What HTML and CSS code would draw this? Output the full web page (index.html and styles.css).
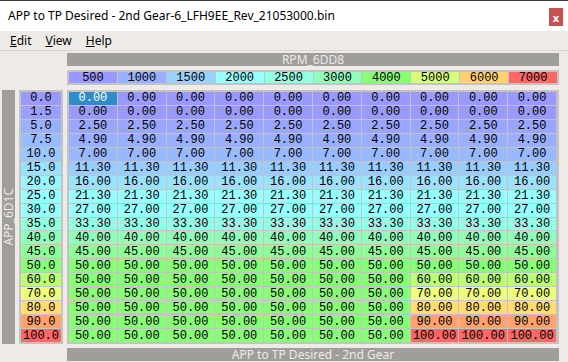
FILE: index.html
```html
<!DOCTYPE html>
<html>
<head>
    <title>APP to TP Desired - 2nd Gear</title>
    <link rel="stylesheet" href="styles.css">
</head>
<body>

<div class="titlebar">
    <span class="title">APP to TP Desired - 2nd Gear-6_LFH9EE_Rev_21053000.bin</span>
    <span class="close">x</span>
</div>

<div class="menubar">
    <span><u>E</u>dit</span>
    <span><u>V</u>iew</span>
    <span><u>H</u>elp</span>
</div>

<div class="sheet">
    <div class="axis-x">RPM_6DD8</div>
    <div class="col-head" id="colHead"></div>
    <div class="axis-y"><span>APP_6D1C</span></div>
    <div class="row-head" id="rowHead"></div>
    <div class="cells" id="cells"></div>
    <div class="table-name">APP to TP Desired - 2nd Gear</div>
</div>

<script>
    const rpm = [500, 1000, 1500, 2000, 2500, 3000, 4000, 5000, 6000, 7000];
    const rpmShade = [0, 5, 12, 25, 34, 40, 50, 65, 82, 100];
    const app = [0, 1.5, 5, 7.5, 10, 15, 20, 25, 30, 35, 40, 45, 50, 60, 70, 80, 90, 100];
    const base = [0, 0, 2.5, 4.9, 7, 11.3, 16, 21.3, 27, 33.3, 40, 45, 50, 50, 50, 50, 50, 50];

    // colour scale used by the editor, 0..100
    const stops = [
        [0, 153, 153, 255],
        [22, 153, 255, 255],
        [30, 150, 255, 255],
        [50, 136, 255, 119],
        [70, 238, 255, 119],
        [80, 255, 221, 112],
        [100, 255, 102, 102]
    ];

    function shade(v) {
        for (let i = 1; i < stops.length; i++) {
            const a = stops[i - 1];
            const b = stops[i];
            if (v <= b[0]) {
                const t = (v - a[0]) / (b[0] - a[0]);
                const c = [1, 2, 3].map(k => Math.round(a[k] + (b[k] - a[k]) * t));
                return 'rgb(' + c.join(',') + ')';
            }
        }
        return 'rgb(255,102,102)';
    }

    function cell(text, v) {
        const el = document.createElement('div');
        el.className = 'cell';
        el.textContent = text;
        el.style.background = shade(v);
        return el;
    }

    const colHead = document.getElementById('colHead');
    rpm.forEach((r, i) => colHead.appendChild(cell(r, rpmShade[i])));

    const rowHead = document.getElementById('rowHead');
    app.forEach(a => rowHead.appendChild(cell(a.toFixed(1), a)));

    const cells = document.getElementById('cells');
    app.forEach((a, r) => {
        for (let c = 0; c < rpm.length; c++) {
            let v = base[r];
            if (c >= 7 && a >= 50) {
                v = a;
            }
            const el = cell(v.toFixed(2), v);
            if (r === 0 && c === 0) {
                el.classList.add('selected');
            }
            cells.appendChild(el);
        }
    });
</script>

</body>
</html>
```

FILE: styles.css
```css
body {
    font-family: "Noto Sans", sans-serif;
    font-size: 12px;
    margin: 0;
    padding: 0;
    width: 568px;
    height: 362px;
    overflow: hidden;
    background-color: #eeebe6;
    color: #000;
}

.titlebar {
    height: 30px;
    border-top: 1px solid #3c3c3c;
    background-color: #fff;
    display: flex;
    align-items: center;
    padding-left: 8px;
}

.title {
    font-size: 12px;
    padding-bottom: 1px;
}

.close {
    margin-left: auto;
    margin-right: 5px;
    margin-top: 2px;
    width: 14px;
    height: 18px;
    background-color: #c75050;
    color: #fff;
    font-weight: bold;
    font-size: 11px;
    display: flex;
    align-items: center;
    justify-content: center;
    line-height: 1;
}

.menubar {
    height: 19px;
    border-bottom: 1px solid #d9d6d1;
    display: flex;
    align-items: center;
    gap: 14px;
    padding-left: 10px;
}

.sheet {
    display: grid;
    grid-template-columns: 13px 44px 492px;
    grid-template-rows: 13px 16px 254px 13px;
    column-gap: 4px;
    row-gap: 4px;
    padding: 2px 0 0 2px;
}

.axis-x,
.table-name {
    grid-column: 3;
    background-color: #a09e9a;
    color: #ecebe9;
    display: flex;
    align-items: center;
    justify-content: center;
    line-height: 1;
}

.axis-x {
    grid-row: 1;
}

.table-name {
    grid-row: 4;
}

.axis-y {
    grid-column: 1;
    grid-row: 3;
    background-color: #a09e9a;
    color: #ecebe9;
    display: flex;
    align-items: center;
    justify-content: center;
}

.axis-y span {
    writing-mode: vertical-rl;
    transform: rotate(180deg);
    line-height: 1;
}

.col-head {
    grid-column: 3;
    grid-row: 2;
    height: 15px;
    box-sizing: border-box;
    padding: 2px 2px 2px 2px;
    background-color: #c3c3c3;
    display: grid;
    grid-template-columns: repeat(10, 1fr);
    column-gap: 1px;
}

.row-head {
    grid-column: 2;
    grid-row: 3;
    padding: 2px;
    background-color: #c3c3c3;
    display: grid;
    grid-template-rows: repeat(18, 1fr);
    row-gap: 1px;
}

.cells {
    grid-column: 3;
    grid-row: 3;
    padding: 2px 3px 2px 2px;
    background-color: #c3c3c3;
    display: grid;
    grid-template-columns: repeat(10, 1fr);
    grid-template-rows: repeat(18, 1fr);
    gap: 1px;
}

.cell {
    font-family: "Liberation Mono", monospace;
    font-size: 12px;
    line-height: 1;
    display: flex;
    align-items: center;
    justify-content: center;
    overflow: hidden;
}

.cell.selected {
    background-color: #2f8cca !important;
    color: #fff;
}
```
